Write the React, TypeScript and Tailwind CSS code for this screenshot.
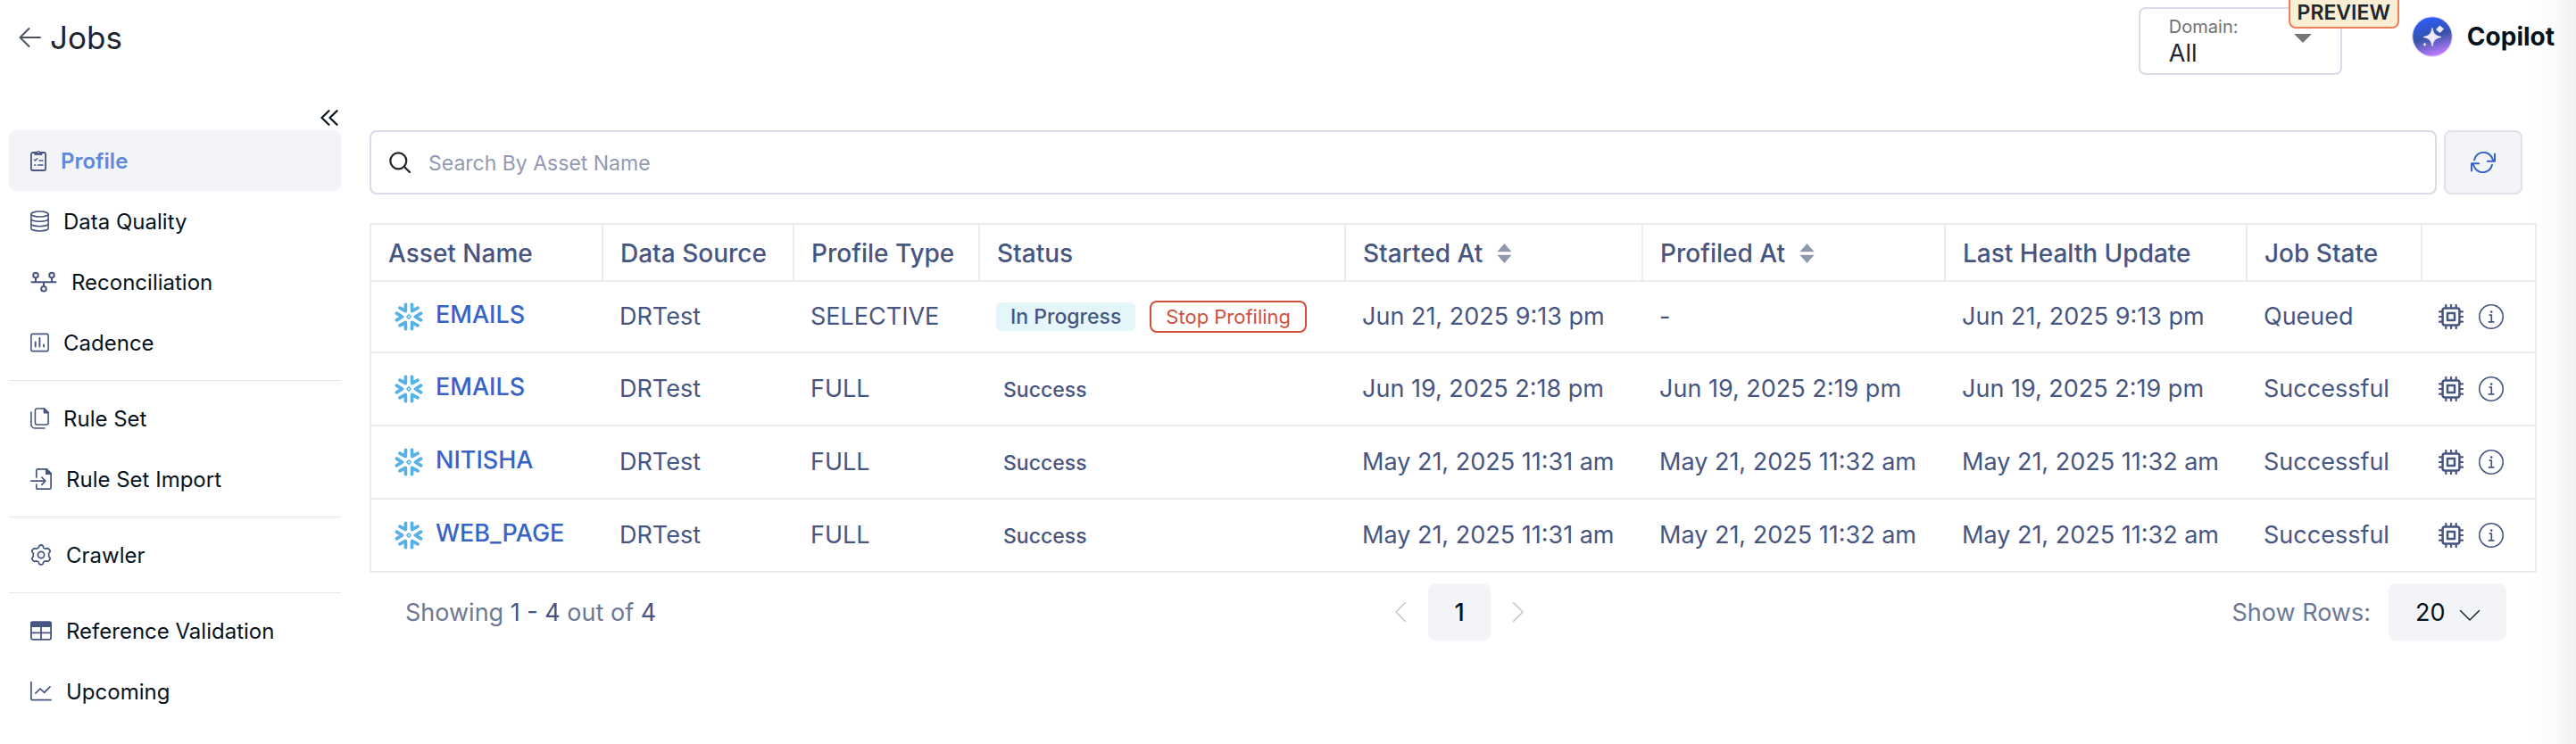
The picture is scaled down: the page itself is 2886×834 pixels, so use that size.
import React from "react";

type IconProps = { className?: string };

const Stroke = ({ className, children, box = "0 0 24 24", w = 1.8 }: IconProps & { children: React.ReactNode; box?: string; w?: number }) => (
  <svg viewBox={box} className={className} fill="none" stroke="currentColor" strokeWidth={w} strokeLinecap="round" strokeLinejoin="round" aria-hidden="true">
    {children}
  </svg>
);

const ClipboardIcon = () => (
  <Stroke box="0 0 18 24" className="h-6 w-[18px]" w={1.8}>
    <rect x="0.9" y="3" width="16.2" height="20" rx="2" />
    <path d="M5 2.6h2.2a1.9 1.9 0 0 1 3.6 0H13v3H5z" fill="currentColor" strokeWidth="0.8" />
    <circle cx="9" cy="2.8" r="0.8" fill="#fff" stroke="none" />
    <path d="M4.3 11l1.2 1 2.2-2.4M10 12h4M4.6 17h1.2M8.5 17H14" strokeWidth="1.3" />
  </Stroke>
);

const DatabaseIcon = () => (
  <Stroke box="0 0 21 24" className="h-6 w-[21px]" w={1.6}>
    <ellipse cx="10.5" cy="4" rx="9.6" ry="3" />
    <path d="M.9 4v16c0 1.7 4.3 3 9.6 3s9.6-1.3 9.6-3V4M.9 9.3c0 1.7 4.3 3 9.6 3s9.6-1.3 9.6-3M.9 14.7c0 1.7 4.3 3 9.6 3s9.6-1.3 9.6-3" />
  </Stroke>
);

const ReconcileIcon = () => (
  <Stroke box="0 0 30 24" className="h-6 w-[30px]" w={2}>
    <path d="M1.5 12.2h27M6 7.5v4.5M24 7.5v4.5M15 12.5V17" />
    <circle cx="6" cy="4.6" r="2.8" />
    <circle cx="24" cy="4.6" r="2.8" />
    <circle cx="15" cy="19.8" r="2.8" />
  </Stroke>
);

const CadenceIcon = () => (
  <Stroke box="0 0 21 24" className="h-6 w-[21px]" w={1.6}>
    <rect x="0.9" y="2.4" width="19.2" height="19.2" rx="1.8" />
    <path d="M5.7 11.5v5M10.4 7v9.5M15 14.5v2" strokeWidth="1.9" />
  </Stroke>
);

const RuleSetIcon = () => (
  <Stroke box="0 0 21 24" className="h-6 w-[21px]" w={1.6}>
    <path d="M7.4 1h8.4L20.1 5.3V17a2 2 0 0 1-2 2H7.4a2 2 0 0 1-2-2V3a2 2 0 0 1 2-2z" />
    <path d="M15.4 1v4.7h4.7z" fill="currentColor" />
    <path d="M.9 5v13.5a4.5 4.5 0 0 0 4.5 4.5H16" />
  </Stroke>
);

const ImportIcon = () => (
  <Stroke className="size-6" w={1.7}>
    <path d="M6.8 10V2.6A1.7 1.7 0 0 1 8.5.9h9.8l4.8 4.8v15.7a1.7 1.7 0 0 1-1.7 1.7H8.5a1.7 1.7 0 0 1-1.7-1.7V18" />
    <path d="M17.8.9v5.3h5.3z" fill="currentColor" />
    <path d="M.9 14.2h15.6M12.8 10l4 4.2-4 4.2" />
  </Stroke>
);

const GearIcon = () => (
  <Stroke className="size-6" w={1.7}>
    <path d="M9.9 1.9Q12 .1 14.1 1.9L14.9 4.2Q15.9 4.5 16.7 5.1L19.2 4.6Q21.9 5.5 22.3 8.3L20.6 10.3Q20.9 12 20.6 13.7L22.3 15.7Q21.9 18.5 19.2 19.4L16.7 18.9Q15.9 19.5 14.9 19.8L14.1 22.1Q12 23.9 9.9 22.1L9.1 19.8Q8.1 19.5 7.3 18.9L4.8 19.4Q2.1 18.5 1.7 15.7L3.4 13.7Q3.1 12 3.4 10.3L1.7 8.3Q2.1 5.5 4.8 4.6L7.3 5.1Q8.1 4.5 9.1 4.2z" />
    <circle cx="12" cy="12" r="3.6" />
  </Stroke>
);

const TableIcon = () => (
  <Stroke className="size-6" w={1.8}>
    <rect x="0.9" y="2.2" width="22.2" height="19.6" rx="1.8" />
    <path d="M1 3h22v4H1z" fill="currentColor" />
    <path d="M1 14.3h22M12 7v14.5" />
  </Stroke>
);

const TrendIcon = () => (
  <Stroke className="size-6" w={1.7}>
    <path d="M.9 1.5V20a1.7 1.7 0 0 0 1.7 1.7H23M5.8 14.2L11 9l4.6 4.4L22 6.8" />
  </Stroke>
);

const SnowflakeIcon = () => (
  <svg viewBox="0 0 32 32" className="size-8 shrink-0" fill="none" stroke="#55b1e6" strokeWidth="3.7" strokeLinecap="round" strokeLinejoin="round" aria-hidden="true">
    {[0, 60, 120, 180, 240, 300].map((angle) => (
      <path key={angle} transform={`rotate(${angle} 16 16)`} d="M29.6 12.2 23.4 16l6.2 3.8" />
    ))}
    <path d="M16 13.8 18.2 16 16 18.2 13.8 16z" strokeWidth="1.5" />
  </svg>
);

const CpuIcon = () => (
  <Stroke box="0 0 28 28" className="size-7" w={2.5}>
    <rect x="4.6" y="4.6" width="18.8" height="18.8" rx="2.4" />
    <rect x="10" y="10" width="8" height="8" />
    <path d="M8.3 1v3M14 1v3M19.7 1v3M8.3 24v3M14 24v3M19.7 24v3M1 8.3h3M1 14h3M1 19.7h3M24 8.3h3M24 14h3M24 19.7h3" strokeWidth="2.2" />
  </Stroke>
);

const InfoIcon = () => (
  <Stroke box="0 0 28 28" className="size-7" w={1.6}>
    <circle cx="14" cy="14" r="13.2" />
    <path d="M11.6 12.2h2.7v7.4M10.8 19.8h6.6" strokeWidth="1.7" strokeLinecap="butt" />
    <circle cx="14.2" cy="8.6" r="1.3" fill="currentColor" stroke="none" />
  </Stroke>
);

const RefreshIcon = () => (
  <Stroke box="0 0 28 24" className="h-6 w-7" w={2}>
    <path d="M4 9.2A10.6 10.6 0 0 1 24.6 8.6L26.6 10.6M27 2.4v8.4h-8.2" />
    <path d="M24 14.8A10.6 10.6 0 0 1 3.4 15.4L1.4 13.4M1 21.6v-8.4h8.2" />
  </Stroke>
);

const CopilotIcon = () => (
  <svg viewBox="0 0 46 46" className="size-[46px]" aria-hidden="true">
    <defs>
      <linearGradient id="copilot" x1="0.35" y1="0" x2="0.65" y2="1">
        <stop offset="0.05" stopColor="#2b5cf6" />
        <stop offset="0.5" stopColor="#3653a8" />
        <stop offset="0.95" stopColor="#c07cff" />
      </linearGradient>
    </defs>
    <circle cx="23" cy="23" r="22.4" fill="url(#copilot)" stroke="#e9e3fb" strokeWidth="1.2" />
    <path d="M23 13.5C24.3 20 26 22 33 23.5 26 25 24.3 27 23 33.5 21.7 27 20 25 13 23.5 20 22 21.7 20 23 13.5z" fill="#efeafc" stroke="#efeafc" strokeLinejoin="round" />
    <path d="M31.5 11.5l3.5 3-3.5 3.5-3.5-3z" fill="#efeafc" stroke="#efeafc" strokeWidth="1.5" strokeLinejoin="round" />
    <path d="M14.5 30v3.6M12.7 31.8h3.6" stroke="#efeafc" strokeWidth="1.2" />
  </svg>
);

const SortIcon = () => (
  <svg viewBox="0 0 17 24" className="h-6 w-[17px]" fill="#9098b0" aria-hidden="true">
    <path d="M8.5 1 16.6 10.3H.4zM8.5 23 16.6 13.7H.4z" />
  </svg>
);

type NavItem = { label: string; Icon: () => React.ReactElement; active?: boolean };

const navGroups: NavItem[][] = [
  [
    { label: "Profile", Icon: ClipboardIcon, active: true },
    { label: "Data Quality", Icon: DatabaseIcon },
    { label: "Reconciliation", Icon: ReconcileIcon },
    { label: "Cadence", Icon: CadenceIcon },
  ],
  [
    { label: "Rule Set", Icon: RuleSetIcon },
    { label: "Rule Set Import", Icon: ImportIcon },
  ],
  [{ label: "Crawler", Icon: GearIcon }],
  [
    { label: "Reference Validation", Icon: TableIcon },
    { label: "Upcoming", Icon: TrendIcon },
  ],
];

const columns = [
  { label: "Asset Name", width: "w-[260px]" },
  { label: "Data Source", width: "w-[214px]" },
  { label: "Profile Type", width: "w-[208px]" },
  { label: "Status", width: "w-[410px]" },
  { label: "Started At", width: "w-[333px]", sortable: true },
  { label: "Profiled At", width: "w-[339px]", sortable: true },
  { label: "Last Health Update", width: "w-[338px]" },
  { label: "Job State", width: "w-[196px]" },
  { label: "", width: "w-[128px]" },
];

const jobs = [
  { name: "EMAILS", source: "DRTest", type: "SELECTIVE", running: true, started: "Jun 21, 2025 9:13 pm", profiled: "-", updated: "Jun 21, 2025 9:13 pm", state: "Queued" },
  { name: "EMAILS", source: "DRTest", type: "FULL", running: false, started: "Jun 19, 2025 2:18 pm", profiled: "Jun 19, 2025 2:19 pm", updated: "Jun 19, 2025 2:19 pm", state: "Successful" },
  { name: "NITISHA", source: "DRTest", type: "FULL", running: false, started: "May 21, 2025 11:31 am", profiled: "May 21, 2025 11:32 am", updated: "May 21, 2025 11:32 am", state: "Successful" },
  { name: "WEB_PAGE", source: "DRTest", type: "FULL", running: false, started: "May 21, 2025 11:31 am", profiled: "May 21, 2025 11:32 am", updated: "May 21, 2025 11:32 am", state: "Successful" },
];

function Header() {
  return (
    <header className="flex h-[118px] items-start justify-between pl-5 pr-6">
      <div className="flex items-center gap-2.5 pt-[18px]">
        <button type="button" aria-label="Back" className="text-[#4b5060]">
          <Stroke box="0 0 26 24" className="h-6 w-[26px]" w={2}>
            <path d="M25 12H3M12.5 2 2.5 12l10 10" />
          </Stroke>
        </button>
        <h1 className="text-[35px] leading-[48px] text-[#20242b]">Jobs</h1>
      </div>
      <div className="flex items-start gap-[78px]">
        <div className="relative mt-2">
          <label className="flex h-[76px] w-[228px] flex-col rounded-lg border-2 border-[#d8dce8] bg-white pl-8 pt-1.5">
            <span className="text-xl leading-7 text-[#707070]">Domain:</span>
            <select defaultValue="All" className="w-40 appearance-none bg-transparent text-[27px] leading-8 text-[#20242b] outline-none">
              <option>All</option>
            </select>
          </label>
          <svg viewBox="0 0 20 10" className="pointer-events-none absolute right-[34px] top-[30px] h-2.5 w-5" fill="#757575" aria-hidden="true">
            <path d="M0 0h20L10 10z" />
          </svg>
          <span className="absolute -right-16 -top-4 rounded-lg border-2 border-[#ef7f57] bg-[#faefd5] px-2 pb-1 pt-2 text-[23px] font-semibold leading-6 text-[#20242b]">PREVIEW</span>
        </div>
        <button type="button" className="mt-[18px] flex items-center gap-4 text-[28px] font-bold leading-[46px] text-[#06121c]">
          <CopilotIcon />
          Copilot
        </button>
      </div>
    </header>
  );
}

function Sidebar() {
  return (
    <aside className="w-[372px] shrink-0">
      <div className="flex h-7 justify-end pr-[3px]">
        <button type="button" aria-label="Collapse menu" className="text-[#06121c]">
          <Stroke box="0 0 20 18" className="h-[18px] w-5" w={2.2}>
            <path d="M9.5 1.2 1.5 9l8 7.8M18.5 1.2l-8 7.8 8 7.8" />
          </Stroke>
        </button>
      </div>
      <nav className="divide-y divide-[#e3e5e6]">
        {navGroups.map((group, i) => (
          <ul key={i} className={i === 0 ? "pb-2" : "py-2"}>
            {group.map(({ label, Icon, active }) => (
              <li key={label}>
                <a
                  href="#"
                  className={`flex h-[68px] items-center gap-4 rounded-lg pl-6 text-2xl ${active ? "bg-[#f2f4f8] font-semibold text-[#5f88dc]" : "text-[#06121c]"}`}
                >
                  <span className="text-[#475680]">
                    <Icon />
                  </span>
                  <span className="pt-0.5">{label}</span>
                </a>
              </li>
            ))}
          </ul>
        ))}
      </nav>
    </aside>
  );
}

function SearchBar() {
  return (
    <div className="flex gap-2 pr-4">
      <label className="flex h-[72px] grow items-center gap-5 rounded-lg border-2 border-[#d8dce8] px-5 text-[#20242b]">
        <Stroke className="size-6" w={2.2}>
          <circle cx="10.3" cy="10.3" r="9" />
          <path d="M17 17l6 6" />
        </Stroke>
        <input type="text" aria-label="Search By Asset Name" placeholder="Search By Asset Name" className="grow bg-transparent pt-0.5 text-[23px] outline-none placeholder:text-[#929ab3]" />
      </label>
      <button type="button" aria-label="Refresh" className="flex h-[72px] w-[88px] items-center justify-center rounded-lg border-2 border-[#dee2e8] bg-[#f2f4f8] text-[#3763c8]">
        <RefreshIcon />
      </button>
    </div>
  );
}

function JobsTable() {
  return (
    <table className="mt-8 w-full table-fixed border-collapse border-2 border-[#ebecf1] text-[27px] text-[#475680]">
      <thead>
        <tr className="h-16">
          {columns.map(({ label, width, sortable }) => (
            <th key={label} scope="col" className={`${width} border-2 border-[#ebecf1] px-[19px] text-left text-[28px] font-medium`}>
              <span className="flex items-center gap-4 pt-0.5">
                {label}
                {sortable && (
                  <button type="button" aria-label={`Sort by ${label}`}>
                    <SortIcon />
                  </button>
                )}
              </span>
            </th>
          ))}
        </tr>
      </thead>
      <tbody>
        {jobs.map((job, i) => (
          <tr key={i} className="h-[82px] border-b-2 border-[#ebecf1] whitespace-nowrap first:h-20">
            <td className="pl-[26px]">
              <div className="flex items-center gap-3.5">
                <SnowflakeIcon />
                <a href="#" className="pb-1 font-medium text-[#3763c8]">{job.name}</a>
              </div>
            </td>
            <td className="pl-[19px]">{job.source}</td>
            <td className="pl-[19px]">{job.type}</td>
            <td className="pl-[19px]">
              {job.running ? (
                <div className="flex items-center gap-4">
                  <span className="rounded-md bg-[#e4f6f9] px-4 text-[23px] font-medium leading-8">In Progress</span>
                  <button type="button" className="rounded-lg border-2 border-[#cf4f3e] px-4 text-[22px] leading-8 text-[#cf4f3e]">Stop Profiling</button>
                </div>
              ) : (
                <span className="px-2 text-[23px] font-medium">Success</span>
              )}
            </td>
            <td className="pl-[19px]">{job.started}</td>
            <td className="pl-[19px]">{job.profiled}</td>
            <td className="pl-[19px]">{job.updated}</td>
            <td className="pl-[19px]">{job.state}</td>
            <td className="pl-[19px]">
              <div className="flex items-center gap-[17px]">
                <button type="button" aria-label="Resource usage"><CpuIcon /></button>
                <button type="button" aria-label="Job details"><InfoIcon /></button>
              </div>
            </td>
          </tr>
        ))}
      </tbody>
    </table>
  );
}

function Pagination() {
  return (
    <div className="grid grid-cols-[1fr_auto_1fr] items-center pl-10 pr-[34px] pt-3 text-[27px] text-[#6d7895]">
      <p className="pt-0.5">
        Showing <span className="text-[#475680]">1 - 4</span> out of <span className="text-[#475680]">4</span>
      </p>
      <div className="flex items-center justify-center gap-6 pl-2 text-[#c2c4c8]">
        <button type="button" aria-label="Previous page">
          <Stroke box="0 0 14 24" className="h-6 w-3.5" w={1.5}>
            <path d="M12.5 1.5 2 12l10.5 10.5" />
          </Stroke>
        </button>
        <button type="button" aria-current="page" className="h-16 w-[70px] rounded-lg bg-[#f2f4f8] pt-0.5 font-medium text-[#06121c]">1</button>
        <button type="button" aria-label="Next page">
          <Stroke box="0 0 14 24" className="h-6 w-3.5" w={1.5}>
            <path d="M1.5 1.5 12 12 1.5 22.5" />
          </Stroke>
        </button>
      </div>
      <div className="flex items-center justify-end gap-5">
        <label htmlFor="page-size" className="pt-0.5">Show Rows:</label>
        <div className="relative">
          <select id="page-size" defaultValue="20" className="h-16 w-[132px] appearance-none rounded-lg bg-[#f2f4f8] pl-[30px] pt-0.5 text-[#06121c] outline-none">
            <option>20</option>
          </select>
          <Stroke box="0 0 24 14" className="pointer-events-none absolute right-[29px] top-[29px] h-3.5 w-6 text-[#20242b]" w={1.5}>
            <path d="M1.5 1.5 12 12 22.5 1.5" />
          </Stroke>
        </div>
      </div>
    </div>
  );
}

export default function App() {
  return (
    <div className="relative min-h-screen overflow-hidden bg-white font-['Inter',sans-serif]">
      <div className="pointer-events-none absolute inset-y-0 right-0 w-12 bg-linear-to-l from-[#eff0f2] via-[#fafbfb] to-white" />
      <div className="relative">
        <Header />
        <div className="flex items-start gap-8 pl-[10px] pr-11">
          <Sidebar />
          <main className="min-w-0 grow pt-7">
            <SearchBar />
            <JobsTable />
            <Pagination />
          </main>
        </div>
      </div>
    </div>
  );
}
